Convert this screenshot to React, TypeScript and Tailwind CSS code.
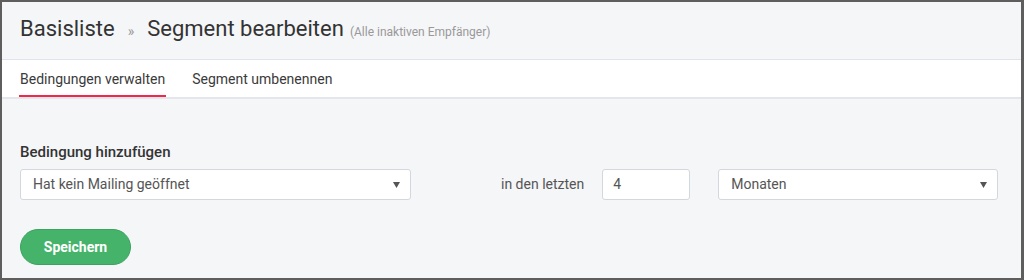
import React from 'react'

function Caret() {
  return (
    <svg width="7" height="6" viewBox="0 0 7 6" className="shrink-0">
      <path d="M0 0h7L3.5 6z" fill="#555" />
    </svg>
  )
}

function SelectBox({ value, width }: { value: string; width: string }) {
  return (
    <div
      className={`${width} flex h-[31px] items-center justify-between rounded-[3px] border border-[#d3d8de] bg-white pl-3 pr-[10px] text-[14px] text-[#555]`}
    >
      <span>{value}</span>
      <Caret />
    </div>
  )
}

export default function App() {
  return (
    <div className="box-border h-[280px] w-[1024px] border-t-2 border-l-2 border-b-2 border-r-[3px] border-[#5e5e5e] bg-[#f5f6f8] font-['Roboto',sans-serif] text-[#333]">
      <div className="flex h-[58px] items-baseline border-b border-[#dfe4ea] px-[18px] pt-[12px]">
        <span className="text-[22px] leading-[30px] text-[#333]">Basisliste</span>
        <span className="ml-[13px] mr-[13px] text-[14px] text-[#9a9a9a]">»</span>
        <span className="text-[22px] leading-[30px] text-[#333]">Segment bearbeiten</span>
        <span className="ml-[6px] text-[12px] text-[#999]">(Alle inaktiven Empfänger)</span>
      </div>

      <div className="flex h-[39px] gap-[26px] border-b-2 border-[#e3e7ec] bg-white px-[17px]">
        <div className="flex h-full items-center border-b-2 border-[#f0284a] px-[1px] pt-[3px] text-[14px] text-[#3a3a3a]">
          Bedingungen verwalten
        </div>
        <div className="flex h-full items-center pt-[1px] text-[14px] text-[#3a3a3a]">
          Segment umbenennen
        </div>
      </div>

      <div className="px-[18px] pt-[43px]">
        <div className="text-[15px] font-medium leading-[20px] text-[#333]">Bedingung hinzufügen</div>
        <div className="mt-[7px] flex items-center">
          <SelectBox value="Hat kein Mailing geöffnet" width="w-[391px]" />
          <span className="ml-[90px] text-[14px] text-[#555]">in den letzten</span>
          <div className="ml-[18px] flex h-[31px] w-[88px] items-center rounded-[3px] border border-[#d3d8de] bg-white pl-[10px] text-[14px] text-[#555]">
            4
          </div>
          <div className="ml-[28px]">
            <SelectBox value="Monaten" width="w-[280px]" />
          </div>
        </div>
        <button className="mt-[29px] h-[36px] w-[111px] rounded-full border border-[#3aa35f] bg-[#46b36b] text-[14px] font-bold text-white">
          Speichern
        </button>
      </div>
    </div>
  )
}
